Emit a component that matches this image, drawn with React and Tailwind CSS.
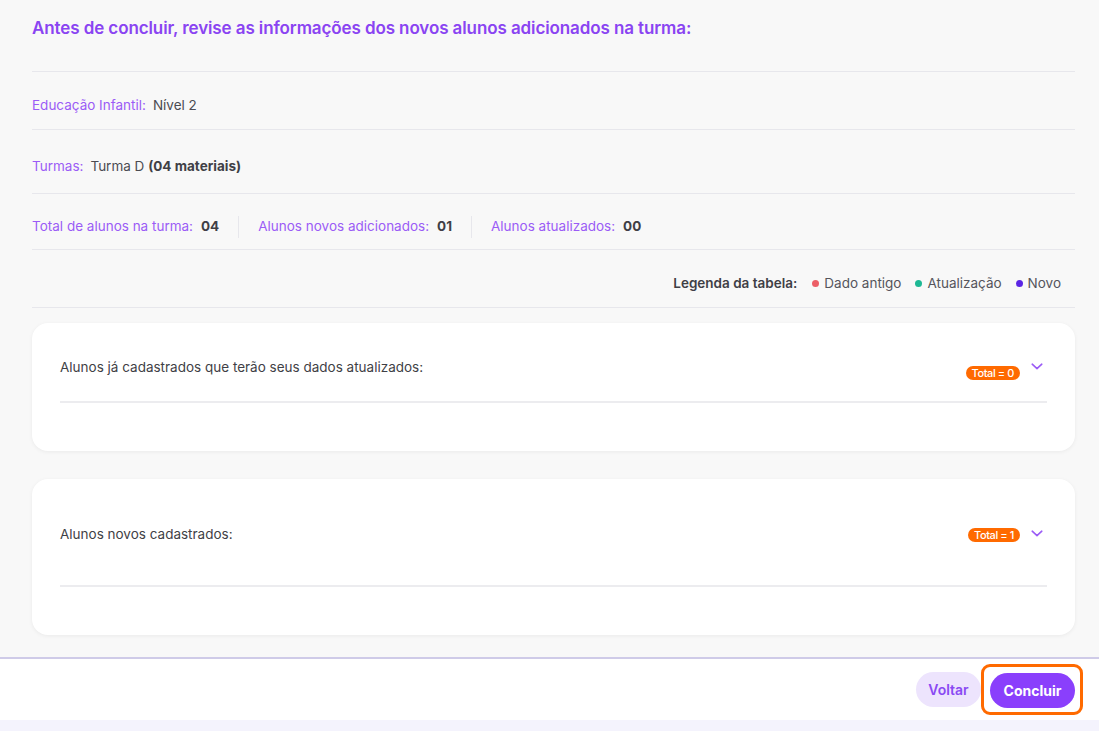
import React from "react";

function Chevron() {
  return (
    <svg width="12" height="7" viewBox="0 0 12 7" fill="none">
      <path d="M1.2 1.2 L6 5.6 L10.8 1.2" stroke="#9b5cf6" strokeWidth="1.6" strokeLinecap="round" strokeLinejoin="round" />
    </svg>
  );
}

function Badge({ n, shift }) {
  return (
    <span
      className="inline-flex items-center h-[14px] px-[6px] rounded-full bg-[#ff6a00] text-white text-[11px] leading-none font-medium tracking-[-0.4px]"
      style={{ transform: `translateY(${shift}px)` }}
    >
      Total = {n}
    </span>
  );
}

function Card({ title, n, top, mid, shift }) {
  return (
    <div className="bg-white rounded-[16px] shadow-[0_1px_4px_rgba(0,0,0,0.06)] px-[28px] pb-[48px]" style={{ paddingTop: top }}>
      <div className="flex items-center h-[22px] pr-[4px]">
        <span className="text-[13.5px] text-[#3f3f46] flex-1">{title}</span>
        <Badge n={n} shift={shift} />
        <span className="ml-[11px] flex items-center -translate-y-[1px]"><Chevron /></span>
      </div>
      <div className="border-b-2 border-[#ececef]" style={{ paddingTop: mid }} />
    </div>
  );
}

export default function App() {
  return (
    <div className="w-[1099px] h-[731px] flex flex-col bg-[#f8f8f8] overflow-hidden" style={{ fontFamily: "Inter, 'Noto Sans', sans-serif" }}>
      <div className="flex-1 pl-[32px] pr-[24px]">
        <div className="h-[72px] border-b border-[#e7e7ec] pt-[16px]">
          <h1 className="text-[17px] leading-[24px] font-semibold text-[#8a44f2] tracking-[-0.1px]">
            Antes de concluir, revise as informações dos novos alunos adicionados na turma:
          </h1>
        </div>
        <div className="h-[58px] border-b border-[#e7e7ec] flex items-center pt-[9px] text-[13.5px]">
          <span className="text-[#9b5cf6]">Educação Infantil:</span>
          <span className="ml-[7px] text-[#4b4b52]">Nível 2</span>
        </div>
        <div className="h-[64px] border-b border-[#e7e7ec] flex items-center pt-[9px] text-[13.5px]">
          <span className="text-[#9b5cf6]">Turmas:</span>
          <span className="ml-[7px] text-[#4b4b52]">Turma D <span className="font-bold text-[#3f3f46]">(04 materiais)</span></span>
        </div>
        <div className="h-[56px] border-b border-[#e7e7ec] flex items-center pt-[10px] text-[13.5px]">
          <span className="text-[#9b5cf6]">Total de alunos na turma:</span>
          <span className="ml-[8px] font-bold text-[#3f3f46]">04</span>
          <span className="mx-[19px] w-px h-[22px] bg-[#e7e7ec]" />
          <span className="text-[#9b5cf6]">Alunos novos adicionados:</span>
          <span className="ml-[8px] font-bold text-[#3f3f46]">01</span>
          <span className="mx-[19px] w-px h-[22px] bg-[#e7e7ec]" />
          <span className="text-[#9b5cf6]">Alunos atualizados:</span>
          <span className="ml-[8px] font-bold text-[#3f3f46]">00</span>
        </div>
        <div className="h-[58px] border-b border-[#e7e7ec] flex items-center justify-end pr-[14px] pt-[10px] text-[13.5px]">
          <span className="font-semibold text-[#3f3f46]">Legenda da tabela:</span>
          <span className="ml-[15px] w-[7px] h-[7px] rounded-full bg-[#ec5f67]" />
          <span className="ml-[5px] text-[#55555c]">Dado antigo</span>
          <span className="ml-[14px] w-[7px] h-[7px] rounded-full bg-[#1db894]" />
          <span className="ml-[5px] text-[#55555c]">Atualização</span>
          <span className="ml-[14px] w-[7px] h-[7px] rounded-full bg-[#5b25e4]" />
          <span className="ml-[5px] text-[#55555c]">Novo</span>
        </div>
        <div className="mt-[15px] flex flex-col gap-[28px]">
          <Card title="Alunos já cadastrados que terão seus dados atualizados:" n={0} top={33} mid={23} shift={6} />
          <Card title="Alunos novos cadastrados:" n={1} top={44} mid={40} shift={1} />
        </div>
      </div>
      <div className="h-[63px] shrink-0 bg-white border-t-2 border-[#cfcbe8] flex items-center justify-end pr-[16px]">
        <button className="w-[65px] h-[35px] rounded-full bg-[#ede4fd] text-[#8a4af3] text-[14px] font-semibold">Voltar</button>
        <div className="border-[3px] border-[#ff6a00] rounded-[9px] pl-[6px] pr-[5px] pt-[6px] pb-[4px]">
          <button className="w-[85px] h-[35px] rounded-full bg-[#8a3ffc] text-white text-[14px] font-bold block">Concluir</button>
        </div>
      </div>
      <div className="h-[11px] shrink-0 bg-[#f4f3fd]" />
    </div>
  );
}
